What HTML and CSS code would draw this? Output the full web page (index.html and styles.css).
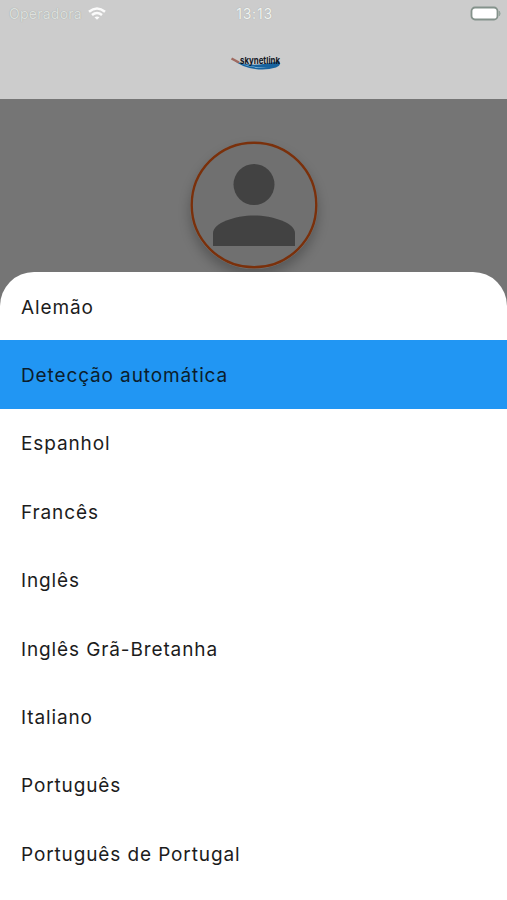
FILE: index.html
```html
<!DOCTYPE html>
<html lang="pt">
<head>
<meta charset="utf-8">
<title>Idioma</title>
<link rel="stylesheet" href="styles.css">
</head>
<body>
<div class="screen">
  <header class="header">
    <div class="status">
      <div class="carrier"><span class="status-text">Operadora</span>
        <svg class="wifi" viewBox="0 0 18 13" width="18" height="13" fill="none" stroke="#fbfbfb" stroke-width="2.5"><path d="M1 4.7Q9-1.8 17 4.7"/><path d="M4 8Q9 4 14 8"/><path d="M6.5 10.3Q9 8.5 11.5 10.3L9 12.8Z" fill="#fbfbfb" stroke="none"/></svg>
      </div>
      <span class="status-text time">13:13</span>
      <svg class="battery" viewBox="0 0 32 16" width="32" height="16"><rect x="1.5" y="1.5" width="26" height="12" rx="3.5" fill="#fff" stroke="#84928b" stroke-width="1.8"/><path d="M29.3 5.2q1.6 2.3 0 4.6z" fill="#95a69d" stroke="#95a69d"/></svg>
    </div>
    <svg class="logo" viewBox="0 0 60 24" width="60" height="24">
      <path d="M9 7.5Q24 17 55 9Q58 13 52 15.5Q42 18.500 31 17Q17 15 9 7.5Z" fill="#17639f"/>
      <path d="M17 11.5Q31 16.5 45 15Q29 17.5 17 11.5Z" fill="#a3cce5"/>
      <path d="M7.500 6.500L15 10.500" stroke="#a06a60" stroke-width="2.500"/>
      <text x="16" y="12" textLength="40" lengthAdjust="spacingAndGlyphs" class="logo-text">skynetlink</text>
    </svg>
  </header>
  <main class="profile">
    <div class="avatar">
      <svg class="ring" viewBox="0 0 128 128" width="128" height="128"><circle cx="64" cy="64" r="62.3" fill="#707070" stroke="#7a300b" stroke-width="2.4"/><g transform="translate(23 23)" fill="#424242"><circle cx="41" cy="20.5" r="20.5"/><path d="M0 82V69C0 59 22 51.5 41 51.5S82 59 82 69V82Z"/></g></svg>
    </div>
  </main>
  <ul class="sheet">
    <li>Alemão</li>
    <li class="selected">Detecção automática</li>
    <li>Espanhol</li>
    <li>Francês</li>
    <li>Inglês</li>
    <li>Inglês Grã-Bretanha</li>
    <li>Italiano</li>
    <li>Português</li>
    <li>Português de Portugal</li>
  </ul>
</div>
</body>
</html>
```
FILE: styles.css
```css
* { box-sizing: border-box; }
body { margin: 0; font-family: Inter, "Liberation Sans", sans-serif; }
.screen { position: relative; height: 900px; overflow: hidden; background: #757575; }
.header { height: 98.5px; background: #ccc; display: flex; flex-direction: column; align-items: center; }
.status { width: 100%; height: 27px; padding: 0 5px 0 9px; display: grid; grid-template-columns: 1fr auto 1fr; align-items: center; }
.carrier { display: flex; align-items: center; gap: 6px; }
.status-text { font-size: 14px; line-height: 18px; color: #dde0de; letter-spacing: .25px; text-shadow: 0 0 1px #949c97; }
.time { margin-right: 2px; color: #f1f3f1; letter-spacing: .8px; }
.battery { justify-self: end; }
.logo { margin-top: 25px; }
.logo-text { font: 700 9.5px Inter, sans-serif; fill: #10151f; }
.profile { height: 173.5px; padding-top: 42.5px; display: flex; justify-content: center; }
.avatar { width: 128px; height: 128px; border-radius: 50%; box-shadow: 0 7px 12px rgba(0,0,0,.25); }
.ring { display: block; }
.sheet { position: absolute; top: 272px; left: 0; right: 0; height: 628px; margin: 0; padding: 0; list-style: none; background: #fff; border-radius: 34px 34px 0 0; overflow: hidden; }
.sheet li { height: 68.4px; padding: 2px 0 0 21px; display: flex; align-items: center; font-size: 19px; letter-spacing: .88px; color: #1c1c1c; }
.sheet .selected { background: #2196f3; color: #0b1d2c; }
```
